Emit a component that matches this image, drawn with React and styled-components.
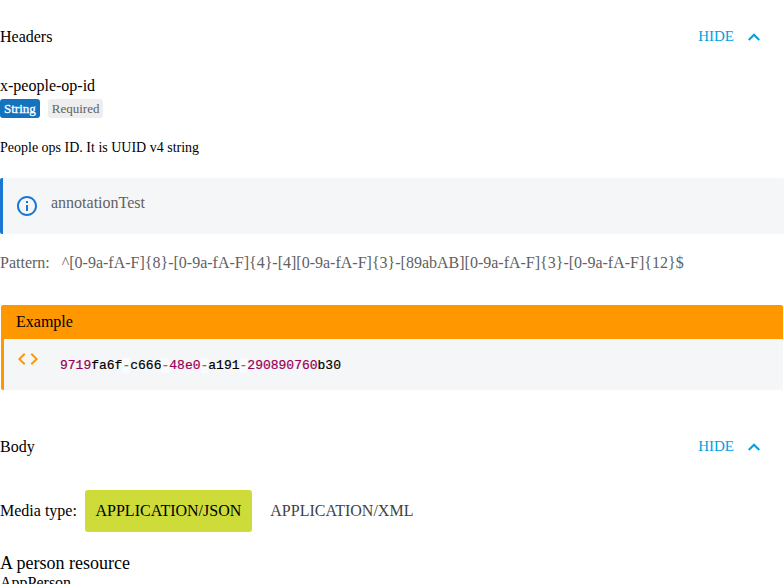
import React from "react";
import styled, { createGlobalStyle } from "styled-components";

const GlobalStyle = createGlobalStyle`
  html, body { margin: 0; background: #fff; overflow: hidden; }
  body { font: 16px/20px "Liberation Serif", "Times New Roman", serif; color: #000; }
`;

const Page = styled.main`
  height: 584px;
  overflow: hidden;
  padding-top: 13px;
  box-sizing: border-box;
`;

const SectionHeader = styled.header`
  display: flex;
  align-items: center;
  justify-content: space-between;
  height: 48px;
  padding-right: 24px;
`;

const SectionTitle = styled.h2`
  margin: 0;
  font-size: 16px;
  font-weight: 400;
`;

const ToggleButton = styled.button`
  display: flex;
  align-items: center;
  gap: 14px;
  padding: 0;
  border: 0;
  background: none;
  color: #00a2df;
  font: 15px/18px "Liberation Serif", serif;
`;

const ToggleLabel = styled.span`
  padding-bottom: 2px;
`;

const Property = styled.section`
  padding: 15px 0 0;
  height: 362px;
  box-sizing: border-box;
`;

const PropertyName = styled.div`
  line-height: 20px;
`;

const Badges = styled.div`
  display: flex;
  gap: 8px;
  margin-top: 3px;
`;

const Badge = styled.span`
  height: 19px;
  padding: 0 4px;
  border-radius: 3px;
  font-size: 13px;
  line-height: 20px;
  color: ${(p) => (p.$primary ? "#fff" : "#616161")};
  background: ${(p) => (p.$primary ? "#1473bf" : "#eeeeee")};
  -webkit-text-stroke: ${(p) => (p.$primary ? "0.3px #fff" : "0")};
`;

const Description = styled.p`
  margin: 20px 0 0;
  font-size: 14px;
  line-height: 20px;
`;

const Annotation = styled.div`
  display: flex;
  gap: 12px;
  height: 56px;
  margin-top: 20px;
  padding: 16px 0 0 12px;
  box-sizing: border-box;
  border-left: 3px solid #1976d2;
  border-radius: 2px;
  background: #f5f6f8;
  color: #616161;
`;

const AnnotationIcon = styled.svg`
  width: 24px;
  height: 24px;
  fill: #1976d2;
`;

const AnnotationText = styled.span`
  line-height: 18px;
`;

const Pattern = styled.div`
  display: flex;
  gap: 12px;
  margin-top: 19px;
  color: #616161;
`;

const Example = styled.div`
  margin: 32px 1px 0;
  border-radius: 2px;
  overflow: hidden;
  background: #f5f6f8;
`;

const ExampleTitle = styled.div`
  height: 34px;
  padding-left: 15px;
  line-height: 34px;
  background: #ff9800;
`;

const ExampleBody = styled.div`
  display: flex;
  height: 51px;
  box-sizing: border-box;
  padding: 8px 0 0 12px;
  border-left: 3px solid #ff9800;
`;

const CodeIcon = styled.svg`
  width: 24px;
  height: 24px;
  fill: #ff9800;
`;

const Code = styled.code`
  margin: 10px 0 0 20px;
  font: 13px/18px "Liberation Mono", "Courier New", monospace;
  -webkit-text-stroke: 0.2px currentColor;
`;

const NumberToken = styled.span`
  color: #990055;
`;

const OperatorToken = styled.span`
  color: #9a6e3a;
  background: hsla(0, 0%, 100%, 0.5);
`;

const MediaTypes = styled.div`
  display: flex;
  align-items: center;
  height: 42px;
  margin-top: 19px;
`;

const MediaLabel = styled.span`
  width: 85px;
`;

const MediaButton = styled.button`
  height: 42px;
  margin-right: 8px;
  padding: 0 10.5px;
  border: 0;
  border-radius: 3px;
  font: 16px/20px "Liberation Serif", serif;
  color: ${(p) => (p.$active ? "#000" : "#424242")};
  background: ${(p) => (p.$active ? "#cddc39" : "transparent")};
`;

const ResourceTitle = styled.div`
  margin-top: 20px;
  font-size: 18px;
  line-height: 22px;
`;

const ResourceType = styled.div`
  line-height: 18px;
`;

const Section = ({ title }) => (
  <SectionHeader>
    <SectionTitle>{title}</SectionTitle>
    <ToggleButton>
      <ToggleLabel>HIDE</ToggleLabel>
      <svg width="12" height="8" viewBox="6 8 12 7.41" fill="currentColor">
        <path d="M12 8l-6 6 1.41 1.41L12 10.83l4.59 4.58L18 14z" />
      </svg>
    </ToggleButton>
  </SectionHeader>
);

export default function App() {
  return (
    <>
      <GlobalStyle />
      <Page>
        <Section title="Headers" />
        <Property>
          <PropertyName>x-people-op-id</PropertyName>
          <Badges>
            <Badge $primary>String</Badge>
            <Badge>Required</Badge>
          </Badges>
          <Description>People ops ID. It is UUID v4 string</Description>
          <Annotation>
            <AnnotationIcon viewBox="0 0 24 24">
              <path d="M11 17h2v-6h-2v6zm1-15C6.48 2 2 6.48 2 12s4.48 10 10 10 10-4.48 10-10S17.52 2 12 2zm0 18c-4.41 0-8-3.59-8-8s3.59-8 8-8 8 3.59 8 8-3.59 8-8 8zM11 9h2V7h-2v2z" />
            </AnnotationIcon>
            <AnnotationText>annotationTest</AnnotationText>
          </Annotation>
          <Pattern>
            <span>Pattern:</span>
            <span>{"^[0-9a-fA-F]{8}-[0-9a-fA-F]{4}-[4][0-9a-fA-F]{3}-[89abAB][0-9a-fA-F]{3}-[0-9a-fA-F]{12}$"}</span>
          </Pattern>
          <Example>
            <ExampleTitle>Example</ExampleTitle>
            <ExampleBody>
              <CodeIcon viewBox="0 0 24 24">
                <path d="M9.4 16.6L4.8 12l4.6-4.6L8 6l-6 6 6 6 1.4-1.4zm5.2 0l4.6-4.6-4.6-4.6L16 6l6 6-6 6-1.4-1.4z" />
              </CodeIcon>
              <Code>
                <NumberToken>9719</NumberToken>fa6f<OperatorToken>-</OperatorToken>c666<OperatorToken>-</OperatorToken>
                <NumberToken>48e0</NumberToken><OperatorToken>-</OperatorToken>a191<OperatorToken>-</OperatorToken>
                <NumberToken>290890760</NumberToken>b30
              </Code>
            </ExampleBody>
          </Example>
        </Property>
        <Section title="Body" />
        <MediaTypes>
          <MediaLabel>Media type:</MediaLabel>
          <MediaButton $active>APPLICATION/JSON</MediaButton>
          <MediaButton>APPLICATION/XML</MediaButton>
        </MediaTypes>
        <ResourceTitle>A person resource</ResourceTitle>
        <ResourceType>AppPerson</ResourceType>
      </Page>
    </>
  );
}
